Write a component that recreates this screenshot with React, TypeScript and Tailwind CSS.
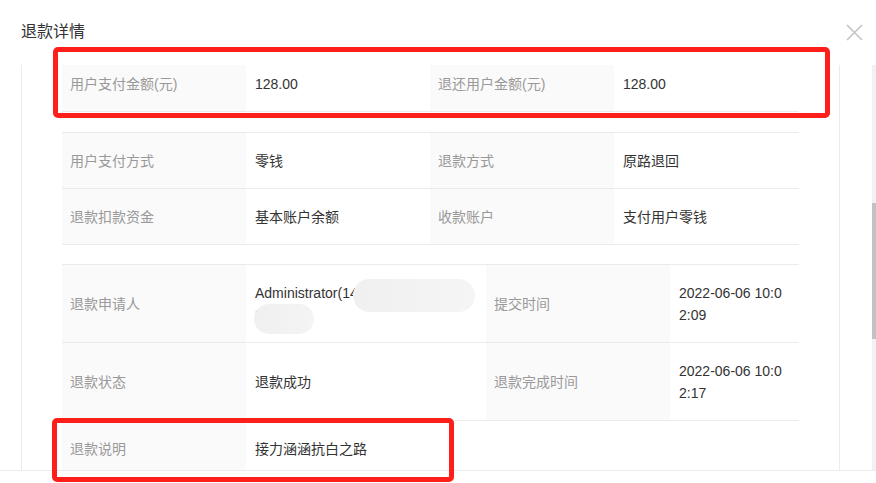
import React from "react";

type Cell = { label: string; value: React.ReactNode };

const LabelCell = ({ children, w }: { children: React.ReactNode; w: string }) => (
  <div className={`${w} shrink-0 h-full flex items-center pl-[8px] bg-[#fafafa] text-[#999999]`}>{children}</div>
);

const ValueCell = ({ children, w }: { children: React.ReactNode; w: string }) => (
  <div className={`${w} shrink-0 h-full flex items-center pl-[9px] pr-[8px] text-[#333333] relative`}>{children}</div>
);

const SimpleTable = ({ rows }: { rows: Cell[][] }) => (
  <div className="w-[737px] border-t border-[#ebebeb]">
    {rows.map((r, i) => (
      <div key={i} className="flex h-[56px] border-b border-[#ebebeb]">
        <LabelCell w="w-[184px]">{r[0].label}</LabelCell>
        <ValueCell w="w-[184px]">{r[0].value}</ValueCell>
        <LabelCell w="w-[184px]">{r[1].label}</LabelCell>
        <ValueCell w="w-[185px]">{r[1].value}</ValueCell>
      </div>
    ))}
  </div>
);

export default function App() {
  return (
    <div
      className="w-[876px] h-[483px] bg-white relative overflow-hidden text-[14px] leading-[22px]"
      style={{ fontFamily: '"Liberation Sans", "Noto Sans CJK SC", sans-serif' }}
    >
      {/* Header */}
      <div className="h-[65px] flex items-start justify-between pl-[21px] pt-[21px]">
        <div className="text-[16px] leading-[22px] text-[#333333]">退款详情</div>
        <svg className="mr-[13px] mt-[3px]" width="17" height="17" viewBox="0 0 17 17">
          <path d="M1 1 L16 16 M16 1 L1 16" stroke="#c4c4c4" strokeWidth="1.6" fill="none" />
        </svg>
      </div>

      {/* Body */}
      <div className="h-[405px] flex">
        <div className="ml-[21px] w-[819px] h-full border-l border-r border-[#ebebeb] overflow-hidden">
          <div className="mt-[-10px] pl-[40px] flex flex-col">
            <SimpleTable
              rows={[
                [
                  { label: "用户支付金额(元)", value: "128.00" },
                  { label: "退还用户金额(元)", value: "128.00" },
                ],
              ]}
            />
            <div className="mt-[20px]">
              <SimpleTable
                rows={[
                  [
                    { label: "用户支付方式", value: "零钱" },
                    { label: "退款方式", value: "原路退回" },
                  ],
                  [
                    { label: "退款扣款资金", value: "基本账户余额" },
                    { label: "收款账户", value: "支付用户零钱" },
                  ],
                ]}
              />
            </div>

            <div className="mt-[19px] w-[737px] border-t border-[#ebebeb]">
              <div className="flex h-[78px] border-b border-[#ebebeb]">
                <LabelCell w="w-[184px]">退款申请人</LabelCell>
                <ValueCell w="w-[240px]">
                  <div>
                    <div>Administrator(14</div>
                    <div>3</div>
                  </div>
                  <div className="absolute left-[107px] top-[14px] w-[122px] h-[33px] rounded-full bg-gradient-to-r from-[#f0f0f0] to-[#f5f5f5]" />
                  <div className="absolute left-[8px] top-[39px] w-[60px] h-[30px] rounded-full bg-gradient-to-r from-[#f0f0f0] to-[#f4f4f4]" />
                </ValueCell>
                <LabelCell w="w-[184px]">提交时间</LabelCell>
                <ValueCell w="w-[129px]">
                  <div className="break-all">2022-06-06 10:02:09</div>
                </ValueCell>
              </div>
              <div className="flex h-[78px] border-b border-[#ebebeb]">
                <LabelCell w="w-[184px]">退款状态</LabelCell>
                <ValueCell w="w-[240px]">退款成功</ValueCell>
                <LabelCell w="w-[184px]">退款完成时间</LabelCell>
                <ValueCell w="w-[129px]">
                  <div className="break-all">2022-06-06 10:02:17</div>
                </ValueCell>
              </div>
              <div className="flex h-[56px]">
                <LabelCell w="w-[184px]">退款说明</LabelCell>
                <ValueCell w="w-[300px]">接力涵涵抗白之路</ValueCell>
              </div>
            </div>
          </div>
        </div>
        <div className="flex-1" />
        <div className="w-[4px] h-full bg-[#f1f1f1] flex flex-col">
          <div className="h-[138px]" />
          <div className="h-[136px] bg-[#c1c1c1]" />
        </div>
      </div>

      {/* Footer */}
      <div className="h-[13px] border-t border-[#ebebeb]" />

      {/* Annotation boxes */}
      <div className="absolute left-[53px] top-[47px] w-[777px] h-[71px] border-[5px] border-[#ff1f1a] rounded-[5px]" />
      <div className="absolute left-[52px] top-[418px] w-[402px] h-[64px] border-[5px] border-[#ff1f1a] rounded-[5px]" />
    </div>
  );
}
